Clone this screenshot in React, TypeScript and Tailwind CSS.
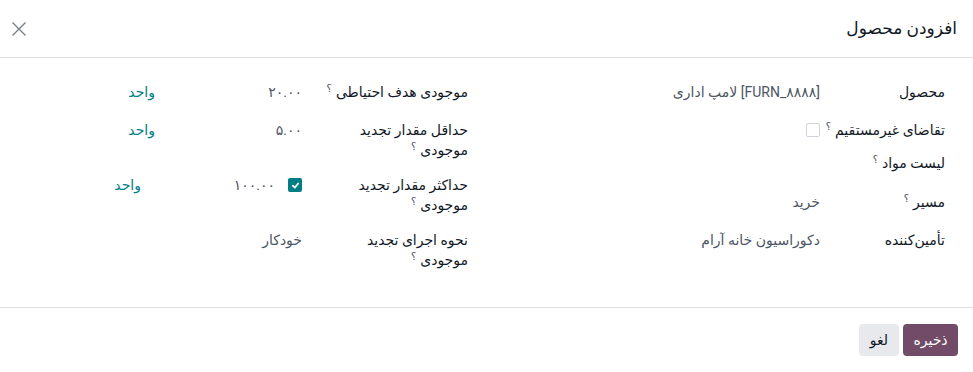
import React from 'react';

const FONT = "font-['Roboto','Noto_Sans','DejaVu_Sans',sans-serif]";

const Hint: React.FC = () => (
    <span className="relative top-[-5px] text-[10px] leading-none text-[#495057] font-normal mr-[4px]">؟</span>
);

interface RowProps {
    label: React.ReactNode;
    labelWidth: string;
    height: string;
    children?: React.ReactNode;
}

const Row: React.FC<RowProps> = ({ label, labelWidth, height, children }) => (
    <div className={`flex items-start ${height}`}>
        <div className={`${labelWidth} shrink-0 text-[14px] leading-[20px] font-medium text-[#111827]`}>{label}</div>
        <div className="flex-1 flex items-center min-h-[20px] text-[14px] leading-[20px] text-[#4b5563]">{children}</div>
    </div>
);

const App: React.FC = () => {
    return (
        <div dir="rtl" className={`w-[973px] h-[372px] bg-white flex flex-col overflow-hidden ${FONT}`}>
            {/* Header */}
            <header className="h-[58px] shrink-0 flex items-center justify-between border-b border-[#dee2e6] pr-[16px] pl-[10px]">
                <h4 className="text-[17px] font-medium text-[#111827] leading-none">افزودن محصول</h4>
                <button className="w-[18px] h-[18px] flex items-center justify-center text-[#7b7f85]">
                    <svg width="16" height="16" viewBox="0 0 16 16" fill="none" stroke="currentColor" strokeWidth="1.4">
                        <path d="M1.5 1.5 L14.5 14.5 M14.5 1.5 L1.5 14.5" />
                    </svg>
                </button>
            </header>

            {/* Body */}
            <main className="flex-1 flex pt-[24px] pr-[28px]">
                <div className="w-[477px] flex flex-col">
                    <Row label="محصول" labelWidth="w-[125px]" height="h-[38px]">
                        <span>[FURN_۸۸۸۸] لامپ اداری</span>
                    </Row>
                    <Row label={<>تقاضای غیرمستقیم<Hint /></>} labelWidth="w-[125px]" height="h-[33px]">
                        <span className="w-[14px] h-[14px] border border-[#ced4da] rounded-[2px] bg-white" />
                    </Row>
                    <Row label={<>لیست مواد<Hint /></>} labelWidth="w-[125px]" height="h-[39px]" />
                    <Row label={<>مسیر<Hint /></>} labelWidth="w-[125px]" height="h-[38px]">
                        <span>خرید</span>
                    </Row>
                    <Row label="تأمین‌کننده" labelWidth="w-[125px]" height="h-[20px]">
                        <span>دکوراسیون خانه آرام</span>
                    </Row>
                </div>

                <div className="flex-1 flex flex-col">
                    <Row label={<>موجودی هدف احتیاطی<Hint /></>} labelWidth="w-[166px]" height="h-[38px]">
                        <span className="w-[147px]">۲۰.۰۰</span>
                        <span className="text-[#017e84]">واحد</span>
                    </Row>
                    <Row label={<span className="block w-[120px]">حداقل مقدار تجدید موجودی<Hint /></span>} labelWidth="w-[166px]" height="h-[55px]">
                        <span className="w-[147px]">۵.۰۰</span>
                        <span className="text-[#017e84]">واحد</span>
                    </Row>
                    <Row label={<span className="block w-[120px]">حداکثر مقدار تجدید موجودی<Hint /></span>} labelWidth="w-[166px]" height="h-[55px]">
                        <span className="w-[161px] flex items-center gap-[13px]">
                            <span className="w-[14px] h-[14px] rounded-[2px] bg-[#017e84] flex items-center justify-center">
                                <svg width="9" height="9" viewBox="0 0 10 10" fill="none" stroke="white" strokeWidth="2" strokeLinecap="round" strokeLinejoin="round">
                                    <path d="M2 5.2 L4.2 7.3 L8 2.8" />
                                </svg>
                            </span>
                            <span>۱۰۰.۰۰</span>
                        </span>
                        <span className="text-[#017e84]">واحد</span>
                    </Row>
                    <Row label={<span className="block w-[120px]">نحوه اجرای تجدید موجودی<Hint /></span>} labelWidth="w-[166px]" height="h-[40px]">
                        <span>خودکار</span>
                    </Row>
                </div>
            </main>

            {/* Footer */}
            <footer className="h-[65px] shrink-0 border-t border-[#dee2e6] flex items-center gap-[4px] pr-[15px]">
                <button className="h-[32px] w-[55px] rounded-[4px] bg-[#714b67] text-white text-[14px] font-medium">ذخیره</button>
                <button className="h-[32px] w-[40px] rounded-[4px] bg-[#e7e9ed] text-[#111827] text-[14px] font-medium">لغو</button>
            </footer>
        </div>
    );
};

export default App;
